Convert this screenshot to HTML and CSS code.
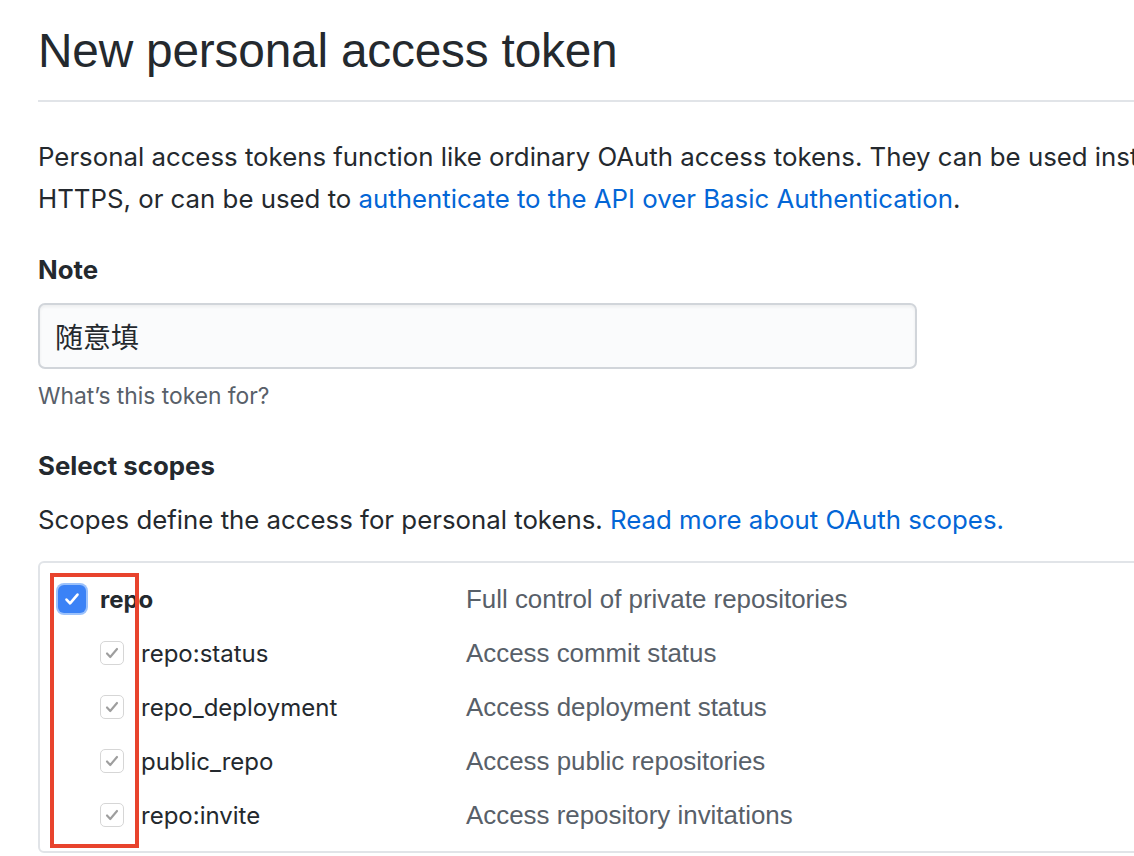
FILE: index.html
```html
<!DOCTYPE html>
<html lang="en">
<head>
<meta charset="utf-8">
<link rel="stylesheet" href="styles.css">
</head>
<body>
<div class="page">
  <h1 class="title">New personal access token</h1>
  <p class="intro">Personal access tokens function like ordinary OAuth access tokens. They can be used instead of a password for Git over<br>HTTPS, or can be used to <a href="#">authenticate to the API over Basic Authentication</a>.</p>
  <div class="field">
    <div class="label">Note</div>
    <div class="input">随意填</div>
    <div class="hint">What’s this token for?</div>
  </div>
  <div class="label scopes-label">Select scopes</div>
  <p class="scopes-desc">Scopes define the access for personal tokens. <a href="#">Read more about OAuth scopes.</a></p>
  <div class="scopes">
    <div class="highlight"></div>
    <div class="row parent">
      <div class="name"><span class="cb cb-on"><svg viewBox="0 0 16 16" width="22" height="22"><path d="M4 8.4l2.6 2.8 5.4-6.4" fill="none" stroke="#fff" stroke-width="1.9" stroke-linecap="round" stroke-linejoin="round"/></svg></span><b>repo</b></div>
      <div class="desc">Full control of private repositories</div>
    </div>
    <div class="row child">
      <div class="name"><span class="cb cb-dis"><svg viewBox="0 0 16 16" width="20" height="20"><path d="M4 8.4l2.6 2.8 5.4-6.4" fill="none" stroke="#9e9e9e" stroke-width="1.7" stroke-linecap="round" stroke-linejoin="round"/></svg></span>repo:status</div>
      <div class="desc">Access commit status</div>
    </div>
    <div class="row child">
      <div class="name"><span class="cb cb-dis"><svg viewBox="0 0 16 16" width="20" height="20"><path d="M4 8.4l2.6 2.8 5.4-6.4" fill="none" stroke="#9e9e9e" stroke-width="1.7" stroke-linecap="round" stroke-linejoin="round"/></svg></span>repo_deployment</div>
      <div class="desc">Access deployment status</div>
    </div>
    <div class="row child">
      <div class="name"><span class="cb cb-dis"><svg viewBox="0 0 16 16" width="20" height="20"><path d="M4 8.4l2.6 2.8 5.4-6.4" fill="none" stroke="#9e9e9e" stroke-width="1.7" stroke-linecap="round" stroke-linejoin="round"/></svg></span>public_repo</div>
      <div class="desc">Access public repositories</div>
    </div>
    <div class="row child">
      <div class="name"><span class="cb cb-dis"><svg viewBox="0 0 16 16" width="20" height="20"><path d="M4 8.4l2.6 2.8 5.4-6.4" fill="none" stroke="#9e9e9e" stroke-width="1.7" stroke-linecap="round" stroke-linejoin="round"/></svg></span>repo:invite</div>
      <div class="desc">Access repository invitations</div>
    </div>
  </div>
</div>
</body>
</html>
```

FILE: styles.css
```css
html, body {
  margin: 0;
  padding: 0;
  background: #fff;
  overflow: hidden;
}
body {
  font-family: Inter, "Noto Sans", "Liberation Sans", "Noto Sans CJK SC", sans-serif;
  color: #24292e;
  font-size: 25.8px;
}
.page {
  padding-left: 38px;
  width: 1400px;
}
.title {
  font-family: "Liberation Sans", Arial, sans-serif;
  font-weight: 400;
  font-size: 47.8px;
  line-height: 48px;
  margin: 0;
  padding-top: 27px;
  padding-bottom: 25px;
  border-bottom: 2px solid #e1e4e8;
  letter-spacing: -0.2px;
}
.intro {
  margin: 34px 0 0;
  line-height: 42px;
  white-space: nowrap;
  font-size: 25.8px;
}
a {
  color: #0366d6;
  text-decoration: none;
}
.field {
  margin-top: 34px;
}
.label {
  font-weight: 700;
  font-size: 25.8px;
  line-height: 32px;
}
.input {
  margin-top: 17px;
  width: 860px;
  height: 62px;
  box-sizing: content-box;
  border: 2px solid #d1d5da;
  border-radius: 7px;
  background: #fafbfc;
  font-family: "Noto Sans CJK SC", sans-serif;
  font-size: 28px;
  line-height: 62px;
  padding-left: 15px;
  box-shadow: inset 0 2px 3px rgba(27,31,35,0.06);
}
.hint {
  margin-top: 12px;
  color: #586069;
  font-size: 22.8px;
  line-height: 30px;
}
.scopes-label {
  margin-top: 39px;
}
.scopes-desc {
  margin: 22px 0 0;
  line-height: 32px;
}
.scopes {
  position: relative;
  margin-top: 25px;
  border: 2px solid #e1e4e8;
  border-radius: 6px;
  padding: 9px 0 9px 18px;
}
.row {
  display: flex;
  align-items: center;
  height: 54px;
  font-size: 24px;
}
.name {
  display: flex;
  align-items: center;
  width: 408px;
  flex: none;
}
.child .name {
  padding-left: 42px;
  width: 366px;
}
.desc {
  font-family: "Liberation Sans", Arial, sans-serif;
  color: #586069;
  font-size: 25.9px;
}
.parent b {
  font-weight: 700;
}
.cb {
  display: inline-flex;
  align-items: center;
  justify-content: center;
  flex: none;
  box-sizing: border-box;
}
.cb-on {
  width: 28px;
  height: 28px;
  margin-right: 14px;
  border-radius: 6px;
  background: #3b82f6;
  box-shadow: 0 0 0 2px #9cc2fb;
}
.cb-dis {
  width: 24px;
  height: 24px;
  margin-right: 17px;
  border-radius: 5px;
  border: 1.5px solid #d6d6d6;
  background: #fff;
}
.highlight {
  position: absolute;
  left: 10px;
  top: 10px;
  width: 89px;
  height: 275px;
  box-sizing: border-box;
  border: 4px solid #e8432d;
  pointer-events: none;
}
```
